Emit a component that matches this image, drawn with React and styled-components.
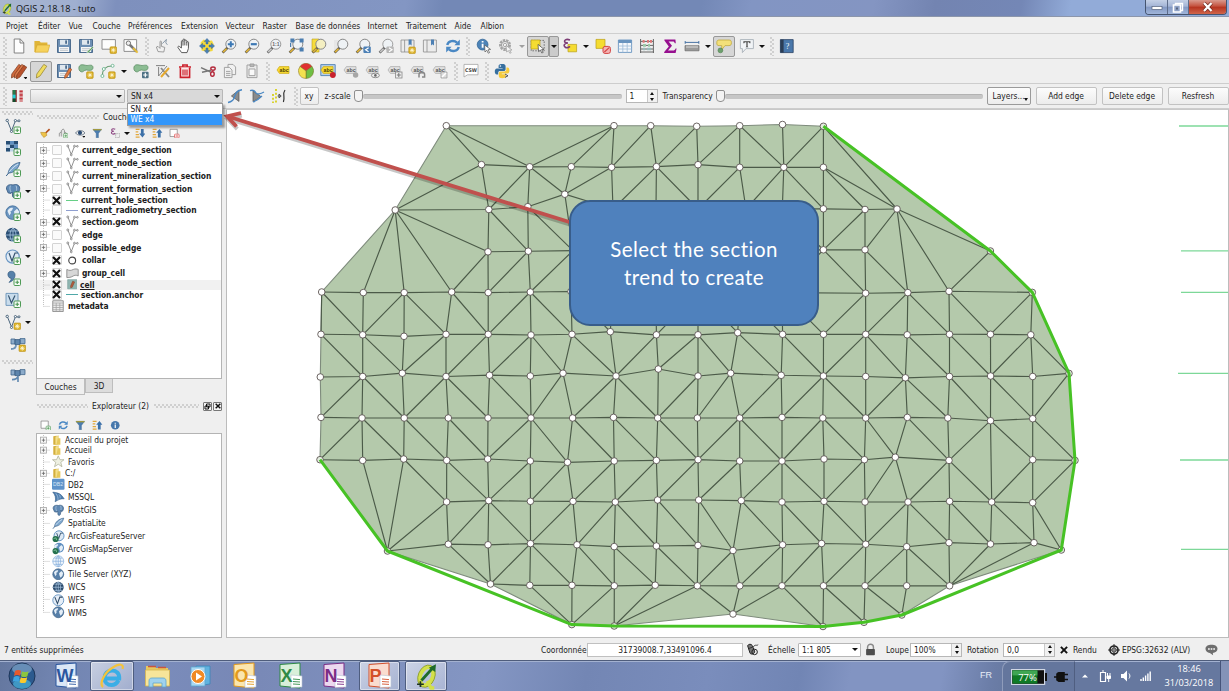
import React from "react";
import styled, { createGlobalStyle, css } from "styled-components";

const Global = createGlobalStyle`
  html, body { margin: 0; padding: 0; overflow: hidden; }
  body, input, button {
    font-family: "DejaVu Sans Condensed", "DejaVu Sans", Tahoma, sans-serif;
    font-size: 8.4px;
    color: #1c1c1c;
  }
  * { box-sizing: border-box; }
  svg { display: block; flex: none; }
`;

/* ---------- icon parts ---------- */

const Plus = ({ x = 9, y = 9 }) => (
  <g>
    <rect x={x} y={y} width="6.5" height="6.5" rx="1" fill="#f4fbf4" stroke="#4f9a56" />
    <path d={`M${x + 3.25} ${y + 1.4}v3.7M${x + 1.4} ${y + 3.25}h3.7`} stroke="#4f9a56" strokeWidth="1.2" />
  </g>
);
const Star = ({ x = 9, y = 9 }) => (
  <g>
    <rect x={x} y={y} width="6.6" height="6.6" rx="1" fill="#dcb228" stroke="#b88d12" strokeWidth=".6" />
    <path d={`M${x + 3.3} ${y + 1}v4.6M${x + 1} ${y + 3.3}h4.6M${x + 1.8} ${y + 1.8}l3 3M${x + 4.8} ${y + 1.8}l-3 3`} stroke="#fff8d8" strokeWidth=".8" />
  </g>
);
const Lens = ({ fill = "#eef2f5", ring = "#888", stick = "#e0b43a", children }) => (
  <g>
    <path d="M6.6 9.6L1.6 14.6" stroke="#4a4a4a" strokeWidth="2.6" />
    <path d="M5.6 10.6L2 14.2" stroke={stick} strokeWidth="1.7" />
    <circle cx="9.8" cy="6.2" r="5" fill={fill} stroke={ring} strokeWidth="1" />
    {children}
  </g>
);
const Disk = () => (
  <g>
    <path d="M1.5 1.5h13v13h-13z" fill="#6d8fb3" stroke="#4d6c8e" />
    <rect x="4" y="1.8" width="8" height="5" fill="#dfe7ee" />
    <rect x="9.2" y="2.4" width="1.8" height="3.4" fill="#4d6c8e" />
    <rect x="3" y="9" width="10" height="5" fill="#f6f6f6" />
    <path d="M4 10.6h8M4 12.4h8" stroke="#b5bcc4" strokeWidth=".8" />
  </g>
);
const VShape = ({ c = "#5b6873" }) => (
  <g fill="none" stroke={c} strokeWidth="1">
    <path d="M2.6 3.2L6.5 13L10.2 3.4M11.5 3h1.6" />
    <circle cx="2.2" cy="2.4" r="1.2" fill="#fff" />
    <circle cx="6.5" cy="13.4" r="1.1" fill="#fff" />
    <circle cx="10.4" cy="2.6" r="1.1" fill="#fff" />
    <circle cx="14" cy="2.8" r="1" fill="#fff" />
  </g>
);
const GlobeLines = () => (
  <path d="M1 8h14M8 1v14M3 4h10M3 12h10M8 1C4 4 4 12 8 15M8 1c4 3 4 11 0 14" fill="none" />
);
const Lands = () => (
  <path d="M2.5 6C4 3 6 2.4 8 3L7 5.4 5.4 6.2 6 8 4.4 10.4zM9 6.6l3-2.8 2.2 2.6-.8 3.6L11 12.4 9.6 9.6z" fill="#e4eef7" />
);
const Tag = ({ fill = "#e0e0e0", ink = "#555", children }) => (
  <g>
    <path d="M1 7L3.4 3.6H13V10.4H3.4z" fill={fill} stroke={fill === "#e0e0e0" ? "#a9a9a9" : "#cba916"} strokeWidth=".7" />
    <text x="3.6" y="8.8" fontSize="5.2" fontWeight="700" fill={ink} fontFamily="Liberation Sans, sans-serif">abc</text>
    {children}
  </g>
);
const Elephant = () => (
  <g>
    <path d="M1.5 6C1 2 5 1 8 2c4-1.4 7.4.6 6.6 4.6-.4 2-1.4 3-2.4 3.2l-.6-2-.8 5c-.4 2.4-3 2.4-3.2.4L7.2 9 6 10.4 3.2 10z" fill="#5f88b3" stroke="#33567c" strokeWidth=".8" />
    <path d="M5.4 2.6C4.600 5 4.800 7 6 9M11 2.600c.8 2 .8 3.400.4 5.200" stroke="#c9dced" strokeWidth=".7" fill="none" />
  </g>
);
const Feather = () => (
  <g>
    <path d="M3 12.6C4 6 9 2.4 15 1.4 13.8 7 9.6 11.4 4.4 12z" fill="#7fa8cf" stroke="#3a628a" strokeWidth=".8" />
    <path d="M1.4 14.8C5 9 9 5.4 13 3" stroke="#e6f0f8" strokeWidth=".8" fill="none" />
    <path d="M1.2 15L4.4 11" stroke="#3a628a" strokeWidth="1" />
  </g>
);
const PencilShape = ({ c = "#cf6a3e", e = "#7b3a1e" }) => (
  <path d="M10.8 1.4l3 1.8L7 13l-3.6 2 .4-4z" fill={c} stroke={e} strokeWidth=".7" />
);
const Poly = () => (
  <path d="M1 4C2 .6 6 2 8 2.4c3 .4 6.6-1.6 7 2C15 8 11 7.6 8.6 7c-3 0-3 2.4-5.4 1.8C1 8 .6 6 1 4z" fill="#8cbd93" stroke="#5d8f66" strokeWidth=".8" />
);

const ICONS = {
  qgis: <g><ellipse cx="8" cy="7.800" rx="3.700" ry="5.600" transform="rotate(22 8 7.800)" fill="none" stroke="#d3e04a" strokeWidth="2.400" /><ellipse cx="8" cy="7.800" rx="4.900" ry="6.800" transform="rotate(22 8 7.800)" fill="none" stroke="#8fa02a" strokeWidth=".5" /><path d="M8.600 10.600l2 4.200h2" stroke="#d3e04a" strokeWidth="2" fill="none" /><path d="M5 10.400L12 2.600" stroke="#1f6b2a" strokeWidth="1.700" /><path d="M13.600.8l-.4 4.600-3.800-2.600z" fill="#1f6b2a" /><path d="M2.400 12.600h4M4.400 10.800v3.400" stroke="#1d3320" strokeWidth="1" /></g>,
  file: <path d="M3.2 1h6l3.6 3.6V15H3.2zM9 1v4h4" fill="#fdfdfd" stroke="#777" strokeWidth=".9" />,
  folder: <g><path d="M.4 3h5l1.4 1.600H13.400V14H.4z" fill="#e0b538" /><path d="M1 14.200L3 7H15.800l-2 7.200z" fill="#f6d25c" stroke="#d2a22a" strokeWidth=".6" /></g>,
  save: <Disk />,
  saveAs: <g><Disk /><path d="M14.600 8.400l1 1-5 5.400-1.800.4.400-1.800z" fill="#63a363" stroke="#fff" strokeWidth=".5" /></g>,
  layoutNew: <g><path d="M1 1.600h13.400v9.600H1z" fill="#fdfdfd" stroke="#848484" strokeWidth=".9" /><Star x={9} y={8.800} /></g>,
  layoutEdit: <g><path d="M1 1.600h12.600v11.800H1z" fill="#fdfdfd" stroke="#848484" strokeWidth=".9" /><path d="M6 6l7.600 7.600" stroke="#777" strokeWidth="2.600" /><path d="M10 10l4.600 4.600" stroke="#e6bd3b" strokeWidth="2" /><circle cx="5.400" cy="5.200" r="2.200" fill="#eee" stroke="#777" /></g>,
  panTouch: <g><path d="M4 13.600L2.400 9 4 8.400l2 2V3.800c0-1 1.400-1 1.400 0v4.600l3.400 1-1 4.600z" fill="#f1f1f1" stroke="#888" strokeWidth=".8" /><path d="M8.400 5.600L12.400 1.400l-.6 3.400 1.600 2" fill="none" stroke="#7d8f9f" strokeWidth=".9" /></g>,
  hand: <path d="M4.600 14.600L1 9.600c-.6-1.400 1-1.800 1.800-.8L4.400 10V3.600c0-1.400 1.600-1.400 1.600 0V2c0-1.400 1.800-1.400 1.800 0v1c0-1.400 2-1.200 2 .2v1.200c.2-1.200 1.800-1 1.800.2l-.2 6-1.400 4zM6 3.600v4M7.800 3v4.400M9.800 4v3.600" fill="#fdfdfd" stroke="#4b4b4b" strokeWidth=".9" />,
  panSel: <g fill="#4a7fb4" stroke="#2f5f92" strokeWidth=".4"><path d="M1.600 4.600l3-3 4 1.400 4.400-.6 1.600 3.600-1 7-5 1-6-1.400z" fill="#f5da3c" stroke="none" /><path d="M8 .4l2.800 3.200H9V6H7V3.600H5.200zM8 15.600l2.800-3.200H9V10H7v2.400H5.200zM.4 8l3.200-2.800V7H6v2H3.600v1.800zM15.600 8l-3.200-2.800V7H10v2h2.400v1.800z" /></g>,
  zoomIn: <Lens><path d="M9.800 3.200v6M6.800 6.200h6" stroke="#3c78b4" strokeWidth="2" /></Lens>,
  zoomOut: <Lens><path d="M6.800 6.200h6" stroke="#3c78b4" strokeWidth="2.200" /></Lens>,
  zoomNative: <Lens ring="#9a9a9a" stick="#c9c9c9"><text x="6.300" y="8" fontSize="5" fontWeight="700" fill="#666" fontFamily="Liberation Sans, sans-serif">1:1</text></Lens>,
  zoomFull: <g><Lens /><g fill="#4a7db0"><path d="M2.400 .6h4v4h-4zM11.600 .6h4v4h-4zM11.600 9.600h4v4h-4z" /><path d="M2.600 5v4" stroke="#4a7db0" strokeWidth="1.200" /></g></g>,
  zoomSel: <g><path d="M1 1h7v13H1z" fill="#f6dc3c" stroke="#b89d21" strokeWidth=".6" /><Lens fill="#f4efc2" /></g>,
  zoomLayer: <g><path d="M1 2h6v11H1z" fill="#e6e6e6" /><Lens /></g>,
  zoomLast: <g><Lens /><rect x="8.400" y="8.600" width="7.400" height="6.400" rx="1" fill="#4c80b6" /><path d="M13.600 9.800l-3 2 3 2" stroke="#fff" fill="none" strokeWidth="1.200" /></g>,
  zoomNext: <g><Lens ring="#9e9e9e" stick="#c6c6c6" /><rect x="8.400" y="8.600" width="7.400" height="6.400" rx="1" fill="#b8b8b8" /><path d="M11 9.800l3 2-3 2" stroke="#fff" fill="none" strokeWidth="1.200" /></g>,
  bookNew: <g><path d="M1 2h13v12H1zM4.600 2v12" fill="#ececec" stroke="#8d8d8d" strokeWidth=".8" /><path d="M8.600 1.400h3v6L10 6.200 8.600 7.600z" fill="#4d80b4" /><Star x={8.800} y={9} /></g>,
  book: <g><path d="M1.400 2h13v12h-13zM5 2v12" fill="#ececec" stroke="#8d8d8d" strokeWidth=".8" /><path d="M9 1.400h3v6l-1.600-1.200L9 7.600z" fill="#4d80b4" /></g>,
  refresh: <g fill="none" stroke="#4a88c4" strokeWidth="2.400"><path d="M2.200 7C3.400 2.600 9 1.800 12 4.600" /><path d="M13.800 9c-1.200 4.400-6.800 5.200-9.800 2.400" /><path d="M14.800 1.600v5.600H9.400zM1.200 14.400V8.800h5.400z" fill="#4a88c4" stroke="none" /></g>,
  info: <g><circle cx="6.600" cy="6.600" r="5.400" fill="#4c83b8" stroke="#316496" strokeWidth=".8" /><path d="M6.600 3v1.600M6.600 5.800v4" stroke="#fff" strokeWidth="1.800" /><path d="M8.600 7l6 4.400-2.600.4 1.600 2.800-1.400.6-1.400-3-1.800 1.800z" fill="#fff" stroke="#555" strokeWidth=".7" /></g>,
  action: <g><circle cx="7" cy="7" r="4.800" fill="none" stroke="#a5a5a5" strokeWidth="2.400" strokeDasharray="2.400 .9" /><circle cx="7" cy="7" r="3.600" fill="#e6e6e6" stroke="#a0a0a0" /><circle cx="7" cy="7" r="1.600" fill="#fff" stroke="#aaa" /><path d="M8 7.400l6 4.600-2.400.2 1.600 2.600-1.400.4-1.400-2.600-1.800 1.400z" fill="#f5f5f5" stroke="#999" strokeWidth=".7" /></g>,
  select: <g><path d="M1.200 2.400h13v10.400h-13z" fill="none" stroke="#6d6d6d" strokeDasharray="1.600 1.200" strokeWidth=".9" /><path d="M1 2h9v9H1z" fill="#f5dc31" stroke="#b99f17" strokeWidth=".7" /><path d="M8 6.400l6 5-2.400.2 1.600 2.800-1.400.6-1.400-3-1.800 1.600z" fill="#fff" stroke="#444" strokeWidth=".7" /></g>,
  expr: <g><path d="M6 6.400h8.600v7.400H6z" fill="#f5dc31" stroke="#b99f17" strokeWidth=".7" /><path d="M8 2C4 .4 1.600 2.400 3 4.200c.6.800 2 .8 3 .8C2.600 5 1.200 7.400 3 9c1.400 1 3.600.6 5-.6" fill="none" stroke="#7d3c75" strokeWidth="1.600" /></g>,
  deselect: <g><path d="M1 1.400h9v9H1z" fill="#f5dc31" stroke="#b99f17" strokeWidth=".7" /><rect x="8" y="8.400" width="7.400" height="7" rx="2" fill="#f4b3b3" stroke="#d34444" /><path d="M9.400 14l4.800-4.400" stroke="#d34444" strokeWidth="1.200" /></g>,
  table: <g><path d="M1.400 2h13.200v12.400H1.400z" fill="#f4f8fc" stroke="#6894bf" strokeWidth=".9" /><path d="M1.400 2h13.200v3H1.400z" fill="#6894bf" /><path d="M5.800 5v9.400M10.200 5v9.400M1.400 8h13.200M1.400 11h13.200" stroke="#9dbbd8" strokeWidth=".8" /></g>,
  abacus: <g><path d="M1.600 1v14M14.400 1v14M1 14h14M2 3.400h12M2 7.400h12M2 11h12" stroke="#666" strokeWidth="1" /><path d="M3.600 3.400h2M8 3.400h2M11 3.400h2" stroke="#d77" strokeWidth="2.600" /><path d="M4 7.400h3M9 7.400h2" stroke="#9cc8a7" strokeWidth="2.600" /><path d="M4 11h2M8 11h4" stroke="#9bb" strokeWidth="2.600" /></g>,
  sigma: <path d="M2.400 1.600h11l.4 3.600h-1c-.4-1.400-1-1.800-2.400-1.800H6.600L10 7.800 6 12.400h4.800c1.600 0 2.200-.6 2.800-2h1L13.600 15H2.200v-1L6.800 8.600 2.400 2.600z" fill="#97108f" />,
  ruler: <g><path d="M1 4.400h14M1.200 3v2.800M14.800 3v2.800" stroke="#4a74a4" strokeWidth="1" /><path d="M1 7.600h14v5.200H1z" fill="#9a9a9a" stroke="#6a6a6a" strokeWidth=".7" /><path d="M3 7.600v2.400M5 7.600v2.400M7 7.600v2.400M9 7.600v2.400M11 7.600v2.400M13 7.600v2.400" stroke="#eee" strokeWidth=".8" /></g>,
  tip: <g><path d="M3 2h10c2 0 2.400 1 2.400 2.600 0 2-.4 3-2.400 3H9L5.600 12l.2-4.400H3C1 7.600.8 6.600.8 4.800.8 3 1.200 2 3 2z" fill="#f3e079" stroke="#c0a93d" strokeWidth=".8" /><circle cx="4.400" cy="12.400" r="2.400" fill="#6da06d" stroke="#4b7d4b" strokeWidth=".6" /></g>,
  textNote: <g><path d="M1.400 1.600h13v9H7l-3.600 4V10.600h-2z" fill="#f1f4f7" stroke="#a8b0b8" strokeWidth=".9" /><path d="M4.400 3.200h7v2h-.8l-.6-1H8.600v4.400l.8.600H6.600l.8-.6V4.200H5.800l-.6 1h-.8z" fill="#444" /></g>,
  help: <g><path d="M1.400 1.600h12.800v13H1.400z" fill="#4a78ab" stroke="#2c4464" strokeWidth=".8" /><path d="M1.400 1.600H4.600v13H1.400z" fill="#2b3d55" /><text x="6.800" y="11" fontSize="8" fill="#fff" fontFamily="Liberation Serif, serif">?</text></g>,

  pencils: <g><g transform="translate(-3 0)"><PencilShape /></g><PencilShape c="#dc7c4c" /><g transform="translate(2 1)"><PencilShape c="#b9522c" /></g><path d="M12.600 14h4l-2 2.400z" fill="#111" /></g>,
  pencil: <PencilShape c="#f0dc5f" e="#8f7d2a" />,
  saveEdit: <g><Disk /><path d="M13.400 5l2.400 1.400-5 8-2.200 1 .2-2.600z" fill="#df7b42" stroke="#8c421d" strokeWidth=".6" /></g>,
  addPoly: <g><Poly /><Star x={8.600} y={8.800} /></g>,
  addLine: <g><path d="M2.400 12.600C2.400 6 6 3 12 3" fill="none" stroke="#6c9d74" strokeWidth="1.200" /><circle cx="2.400" cy="13" r="1.500" fill="#fff" stroke="#7b9" /><circle cx="3.800" cy="6" r="1.500" fill="#fff" stroke="#7b9" /><circle cx="12.600" cy="2.800" r="1.500" fill="#fff" stroke="#7b9" /><Star x={8.600} y={8.800} /></g>,
  movePoly: <g><Poly /><rect x="9" y="8.800" width="6.600" height="6.400" rx="1" fill="#4d7184" /><path d="M12.300 9.800v4.400M10.200 12h4.200" stroke="#fff" strokeWidth="1.200" /></g>,
  nodeTool: <g><path d="M1 2.600h9M3.600 4v9M3.600 13L12 3" stroke="#777" strokeWidth=".9" fill="none" /><path d="M6 5l8 9" stroke="#888" strokeWidth="1.800" /><path d="M14 5l-8 9" stroke="#e5a92e" strokeWidth="2" /></g>,
  trash: <g fill="none" stroke="#cc1f2b"><path d="M2 4h12M5.800 3.600V2h4.400v1.600" strokeWidth="1.500" /><path d="M3.400 4.400V14.400h9.200V4.400" strokeWidth="1.600" fill="#fbeaea" /><path d="M6 6.400v6M8 6.400v6M10 6.400v6" strokeWidth="1.200" /></g>,
  cut: <g><path d="M1 4.600L10.600 9M2 9.200L11 7.200" stroke="#777" strokeWidth="1.400" /><ellipse cx="13" cy="5.600" rx="2.200" ry="1.600" fill="none" stroke="#b3283a" strokeWidth="1.400" /><ellipse cx="12.400" cy="11" rx="1.800" ry="2.200" fill="none" stroke="#b3283a" strokeWidth="1.400" /></g>,
  copy: <g fill="#f1f1f1" stroke="#9b9b9b" strokeWidth=".9"><path d="M6 1.400h5l2.600 2.600v7.600H6z" /><path d="M2.400 4.400h5L10 7v7.600H2.400z" /><path d="M4 8.400h4.400M4 10.400h4.400M4 12.400h4.400" /></g>,
  paste: <g fill="#e9e9e9" stroke="#9b9b9b" strokeWidth=".9"><path d="M3 2h10v12.600H3z" /><path d="M6 1h4v2.400H6z" fill="#bbb" /><path d="M5 6h6v6.600H5z" fill="#f9f9f9" /></g>,
  label: <Tag fill="#f7da33" ink="#4b3c05" />,
  pie: <g stroke="#7a6a22" strokeWidth=".5"><path d="M8 8L2 3.400A7.400 7.400 0 0 1 14 3.400z" fill="#e03131" /><path d="M8 8l6-4.600A7.400 7.400 0 0 1 8 15.400z" fill="#6fbf44" /><path d="M8 8v7.400A7.400 7.400 0 0 1 2 3.400z" fill="#f3e14f" /></g>,
  labelPin: <g><path d="M.8 1.600h14.400v11H.8z" fill="#b7cfe8" stroke="#4f80b4" strokeWidth=".9" /><Tag fill="#f7da33" ink="#4b3c05" /><circle cx="12.800" cy="12" r="2.900" fill="#c9222e" /></g>,
  labelGray: <Tag><circle cx="12.600" cy="12" r="2.700" fill="#a6a6a6" /></Tag>,
  labelEye: <Tag><ellipse cx="10.400" cy="12.400" rx="4" ry="2.300" fill="#eee" stroke="#777" strokeWidth=".8" /><circle cx="10.400" cy="12.400" r="1.300" fill="#666" /></Tag>,
  labelMove: <Tag><rect x="8.600" y="9" width="6.400" height="6" fill="#eee" stroke="#888" strokeWidth=".8" /><path d="M11.800 10v4M9.800 12h4" stroke="#777" /></Tag>,
  labelRot: <Tag><path d="M9 14.600v-3c0-3 5.600-3 5.600 0v2.400H12" fill="none" stroke="#888" strokeWidth="1.500" /></Tag>,
  labelEdit: <Tag><path d="M9 9h6v6H9z" fill="#dedede" stroke="#999" strokeWidth=".7" /><path d="M10 14l4-4" stroke="#fff" strokeWidth="1.400" /></Tag>,
  csw: <g><path d="M1 1.400h14v10.400H4.600L1 14z" fill="#fff" stroke="#a5a5a5" strokeWidth=".8" /><text x="2" y="8.600" fontSize="5" fontWeight="700" fill="#444" fontFamily="DejaVu Sans, sans-serif" textLength="12" lengthAdjust="spacingAndGlyphs">CSW</text></g>,
  python: <g><path d="M8 1C5 1 4.600 2 4.600 3.400V5h4v.6H3C1.400 5.600.8 7 .8 8.600s.6 3 2 3h1.400V9.800C4.200 8.400 5.200 8 6.400 8h3.200c1.200 0 2-.6 2-1.800V3.400C11.600 1.600 10.400 1 8 1z" fill="#366f9f" /><path d="M8.400 15.200c3 0 3.400-1 3.400-2.400v-1.600h-4v-.6h5.600c1.600 0 2-1.400 2-3s-.4-3-1.800-3h-1.200v2c0 1.400-1 1.800-2.200 1.800H7c-1.200 0-2.200.6-2.200 1.800v2.600c0 1.800 1.200 2.400 3.600 2.400z" fill="#f5cb3d" /><circle cx="6.400" cy="3" r=".8" fill="#fff" /><path d="M11 11l3 1.800-3 1.600" stroke="#555" fill="none" /></g>,
  bars: <g><path d="M2.600 2h4.200v12H2.600z" fill="#8b2f2f" /><path d="M2.600 2h3v4.600h-3z" fill="#267c4c" /><path d="M2.600 6.600h3v4h-3z" fill="#1bd3d6" /><path d="M2.600 10.600h3V14h-3z" fill="#124e2c" /><path d="M9.400 2h3.400v12H9.400z" fill="#d88f92" /><path d="M9.600 3.400h3M9.600 7h3M9.600 10.600h3" stroke="#c0343c" strokeWidth="1.400" /></g>,
  secL: <g><path d="M12 2v11.400L4.400 8z" fill="#8b8b8b" stroke="#555" strokeWidth=".7" /><path d="M15 1.800C10 2.400 8.400 5 7.600 8.600S5 13.800 1 14.400" fill="none" stroke="#4a88c4" strokeWidth="1.500" /></g>,
  secR: <g><path d="M4 3v10.600l8-5z" fill="#8b8b8b" stroke="#555" strokeWidth=".7" /><path d="M1 2.600C4 1.600 6 3 7 5s5 .6 8-1M4 14c3-1 6-3 9-6" fill="none" stroke="#4a88c4" strokeWidth="1.300" /></g>,
  secDots: <g><path d="M2 6v9M5 1v14" stroke="#d9d330" strokeWidth="2" strokeDasharray="2 1.800" /><path d="M6.600 8h3M8 6v4l2.200-2z" stroke="#555" fill="none" /><path d="M14 2c-3 4 .4 7-1.600 12" stroke="#333" strokeWidth="1.200" fill="none" /></g>,

  vAdd: <g><VShape c="#4b657c" /><Plus /></g>,
  rasterAdd: <g><path d="M1 1h12v10.500H1z" fill="#bdd2e6" /><path d="M1 1h4v3.500H1zM9 1h4v3.500H9zM5 4.500h4V8H5zM1 8h4v3.500H1zM9 8h4v3.500H9z" fill="#274e74" /><path d="M5 1h4v3.500H5zM9 4.500h4V8H9z" fill="#5f8fbf" /><Plus /></g>,
  featherAdd: <g><Feather /><Plus /></g>,
  pgAdd: <g><Elephant /><Plus /></g>,
  globeAdd: <g><circle cx="7.600" cy="7.600" r="6.800" fill="#6b95c0" stroke="#3f6c98" strokeWidth=".8" /><Lands /><Plus /></g>,
  wcsAdd: <g><circle cx="7.600" cy="7.600" r="6.800" fill="#2b4f74" /><g stroke="#a9c6e2" strokeWidth=".8"><GlobeLines /></g><Plus /></g>,
  wfsAdd: <g><circle cx="7.600" cy="7.600" r="6.600" fill="#dfeaf5" stroke="#6a97c4" strokeWidth="1.200" /><path d="M4 4l3 8 3-8h3" stroke="#35536f" strokeWidth="1.200" fill="none" /><Plus /></g>,
  commaAdd: <g><path d="M5 1.400c4-.8 6 2 4.600 6C8.600 10 6.600 11.600 4 12.400c2-2 2.400-3 2-4.200C3 8.400 1.400 2.600 5 1.400z" fill="#5580a9" stroke="#34597e" strokeWidth=".7" /><Plus /></g>,
  virtAdd: <g><path d="M1 1.400h12v12H1z" fill="#c9dcec" stroke="#6a92b8" strokeWidth=".9" /><path d="M3.400 3.400l3 7.600 3.600-7.600" stroke="#35536f" fill="none" strokeWidth="1.200" /><Plus /></g>,
  vNew: <g><VShape c="#4b657c" /><Star /></g>,
  satNew: <g><path d="M1 3h4v5H1zM10 2.600h5v5h-5z" fill="#8cabca" stroke="#41678d" strokeWidth=".8" /><path d="M5 3.600h5v5H5z" fill="#5d85ad" stroke="#35597d" strokeWidth=".8" /><path d="M6 9c0 3-1.600 4-5 4" stroke="#6f93b8" strokeWidth="1.800" fill="none" /><Star /></g>,
  sat: <g><path d="M1 3h4v5H1zM10 2.600h5v5h-5z" fill="#8cabca" stroke="#41678d" strokeWidth=".8" /><path d="M5 3.600h5v5H5z" fill="#5d85ad" stroke="#35597d" strokeWidth=".8" /><path d="M8 8.600c-.4 3.400-3 4-6 4M8 9v6" stroke="#5f88b0" strokeWidth="1.600" fill="none" /></g>,

  brush: <g><path d="M14.600 1.600L8.600 7.600" stroke="#b44f1d" strokeWidth="2.600" /><path d="M1 6.600l8 .4 1.600 4L6 14.400C4 13 2 10 1 6.600z" fill="#eec34a" stroke="#b28420" strokeWidth=".8" /></g>,
  groupAdd: <g><path d="M5 13V4l3-2.600L10 4v9M2 13V8l3-2M10 6l3 2v3" fill="#e3e3e3" stroke="#777" /><Plus x={8.600} y={8.600} /></g>,
  eye: <g><path d="M.8 7.600C4 2.600 12 2.600 15.200 7.600 12 12 4 12 .8 7.600z" fill="#eee" stroke="#5b6b7b" strokeWidth="1.200" /><circle cx="7.600" cy="7.400" r="3.200" fill="#2a4b73" /><path d="M11 12h5l-2.500 3z" fill="#111" /></g>,
  filter: <g><path d="M1.400 2h13.200L9.800 8.400V15H6.400V8.400z" fill="#4c7db0" stroke="#34618f" strokeWidth=".6" /><path d="M1.600 1.600h12.800v2H1.600z" fill="#a59a3a" /></g>,
  exprFilter: <g><path d="M8 2C4 -.2 1.600 2 3 4c.6.800 2 .8 3 .8C2.600 4.800 1.200 7 3 8.600c1.400 1 3.600.6 5-.6" fill="none" stroke="#8d4683" strokeWidth="1.600" /><path d="M8.600 8.600h6v6h-6z" fill="none" stroke="#888" strokeDasharray="1.500 1" /></g>,
  expand: <g><path d="M1 2h6M1 6h4M1 10h5M1 14h6" stroke="#e2a83d" strokeWidth="2" /><path d="M9 1.400v7H6.400l5 6 4.400-6h-2.600v-7z" fill="#3c70a8" /></g>,
  collapse: <g><path d="M1 2h6M1 6h4M1 10h5M1 14h6" stroke="#e2a83d" strokeWidth="2" /><path d="M9 14.400v-7H6.400l5-6 4.400 6h-2.600v7z" fill="#3c70a8" /></g>,
  remove: <g><path d="M1.600 2h11v11h-11z" fill="#fdfdfd" stroke="#777" /><rect x="8.400" y="9.400" width="7" height="5.600" rx="1" fill="#fff" stroke="#d44" /><path d="M10 12.200h4" stroke="#d44" strokeWidth="1.400" /></g>,
  addFrame: <g><path d="M1.600 1.600h11v11h-11z" fill="#fdfdfd" stroke="#777" /><Plus x={9.400} y={9.400} /></g>,
  infoDot: <g><circle cx="8" cy="8" r="6.600" fill="#4678ac" /><path d="M8 4v1.800M8 7v5" stroke="#fff" strokeWidth="1.800" /></g>,

  v: <VShape c="#777" />,
  point: <circle cx="7.600" cy="8" r="4.200" fill="#fff" stroke="#444" strokeWidth="1.400" />,
  polygon: <path d="M1 3c3 1.600 5 1.600 8 0 2-1 5-.6 6 0v8c-3-1.600-5-.6-6 0-3 2-6 2-8 2z" fill="#d7d7d7" stroke="#808080" />,
  cell: <g><path d="M1 1h14v14H1z" fill="#8fb5b0" stroke="#7ba09c" /><path d="M8.600 3.400l3 1L8 12.600l-2.400.8-.2-2.600z" fill="#b35b3d" stroke="#7c3b24" strokeWidth=".7" /></g>,
  metadata: <g><path d="M1 1h14v14.400H1z" fill="#ececec" stroke="#777" /><path d="M1 4h14M1 7h14M1 10h14M1 13h14M5.600 4v11M10.400 4v11" stroke="#a1a1a1" /></g>,

  folderY: <g><path d="M2 2l5-1v14H2z" fill="#d6b03e" /><path d="M5 2.600l5-1.600v13L5 15.600z" fill="#f4e08a" stroke="#d1ac3f" strokeWidth=".5" /><path d="M9 5h4v10H7z" fill="#e6c85c" /></g>,
  fav: <path d="M8 1l2.200 5h5.200l-4.200 3.400 1.600 5.600L8 11.800 3.200 15l1.600-5.600L.6 6h5.200z" fill="#eef0e2" stroke="#a9ac94" strokeWidth=".9" />,
  db2: <g><rect x="0" y="1" width="16" height="14" rx="1.500" fill="#5e93ca" /><text x="1.400" y="10.600" fontSize="6.600" fill="#d5e6f6" fontFamily="Liberation Sans, sans-serif">DB2</text></g>,
  mssql: <g><path d="M1 1.400c5 .6 9 1.600 11.600 4.600l3 4C12 9.400 8 11 4 13.800 5.400 9 4 5 1 1.400z" fill="#4f7fb0" stroke="#2c5682" strokeWidth=".7" /><path d="M5 3c2 3 3 5 2.600 8.600M9 4.400c1.400 2 1.600 3 1.400 5" stroke="#bdd3e8" strokeWidth=".8" fill="none" /></g>,
  pg: <Elephant />,
  feather: <Feather />,
  arcF: <g><circle cx="9" cy="7.400" r="6.400" fill="#dfeaf5" stroke="#5f8fc0" strokeWidth="1.200" /><path d="M6 4l2.600 7L11 4h3" stroke="#35536f" strokeWidth="1.200" fill="none" /><circle cx="4.600" cy="11.600" r="4" fill="#26724f" /><path d="M2 11l3-1 1 3" stroke="#8fd0a8" fill="none" /></g>,
  arcM: <g><circle cx="9" cy="7.400" r="6.400" fill="#5f8fc0" /><Lands /><circle cx="4.600" cy="11.600" r="4" fill="#26724f" /><path d="M2 11l3-1 1 3" stroke="#8fd0a8" fill="none" /></g>,
  ows: <g stroke="#85aedb" strokeWidth=".9"><circle cx="8" cy="8" r="7" fill="#f0f6fc" /><GlobeLines /></g>,
  globe: <g><circle cx="8" cy="8" r="7" fill="#577fa8" stroke="#34597f" strokeWidth=".8" /><Lands /></g>,
  wcs: <g><circle cx="8" cy="8" r="7" fill="#2b4a6b" /><g stroke="#a9c6e2" strokeWidth=".9"><GlobeLines /></g></g>,
  wfs: <g><circle cx="8" cy="8" r="7" fill="#e6eef7" stroke="#6a97c4" strokeWidth="1.200" /><path d="M3.600 4L7 12.400 10 4h3.600" stroke="#2e4a66" strokeWidth="1.300" fill="none" /></g>,

  mouse: <g fill="none" stroke="#222"><path d="M2 3.400C3 1 6.600 1 7.600 3l3 7c.6 3-3.600 5-5.600 2.600z" fill="#777" strokeWidth="1.200" /><path d="M3 7l5-2M9 5c2-4 4-1 6-3" /><circle cx="10.600" cy="11" r="3.400" strokeWidth="1.200" /></g>,
  lock: <g><path d="M4.400 8V5c0-4.600 7.200-4.600 7.200 0v3" fill="none" stroke="#8a8a8a" strokeWidth="1.800" /><rect x="2.600" y="7.400" width="10.800" height="7.600" rx="1" fill="#4e4e4e" /></g>,
  crs: <g><circle cx="8" cy="8" r="5.400" fill="#efefef" stroke="#222" strokeWidth="2.200" /><path d="M8 0v16M0 8h16" stroke="#222" strokeWidth="1.200" /><circle cx="8" cy="8" r="3" fill="#888" stroke="#333" /></g>,
  bubble: <g><path d="M8 2c4.400 0 7.400 1.800 7.400 5S12.600 12 9.600 12.200L10 15l-4-2.800C2.600 11.600.6 10 .6 7 .6 3.800 3.600 2 8 2z" fill="#6e6e6e" /><path d="M3.800 7.400h2M7 7.400h2M10.200 7.400h2" stroke="#fff" strokeWidth="1.800" /></g>,
};

const Icon = ({ name, size = 16 }) => (
  <svg width={size} height={size} viewBox="0 0 16 16" aria-hidden="true">{ICONS[name]}</svg>
);

/* ---------- generic controls ---------- */

const dots = css`
  background: radial-gradient(circle at 1px 1px, #cfcfcf 0.7px, transparent 1px) 0 0 / 4px 4px,
    radial-gradient(circle at 3px 3px, #cfcfcf 0.7px, transparent 1px) 0 0 / 4px 4px;
`;

const Window = styled.div`
  position: relative;
  width: 1229px;
  height: 691px;
  display: flex;
  flex-direction: column;
  background: #efefef;
  overflow: hidden;
`;

const TitleBar = styled.header`
  height: 17px;
  flex: none;
  display: flex;
  align-items: flex-start;
  justify-content: space-between;
  border-bottom: 1px solid #8c96ab;
  background: linear-gradient(100deg, #a9b6d0 0, #9fafd0 75px, #7e90bd 115px, #8396c3 33%, #7388b6 36%, #7388b6 57%, #8295c3 61%, #8495c2 71%, #7384b1 76%, #7487b6 83%, #92abd8 87%);
`;
const Title = styled.div`
  display: flex;
  align-items: center;
  gap: 3px;
  height: 17px;
  padding-left: 1px;
  font: 9.1px "Open Sans", "Noto Sans", sans-serif;
  color: #111;
`;
const Caption = styled.div`
  display: flex;
  width: 82px;
  height: 15px;
  margin-right: 2px;
  border: 1px solid #45546f;
  border-top: 0;
  border-radius: 0 0 4px 4px;
  overflow: hidden;
`;
const CaptionButton = styled.div`
  flex: ${(p) => p.$grow};
  display: flex;
  align-items: center;
  justify-content: center;
  border-left: ${(p) => (p.$first ? 0 : "1px solid #5d6c8a")};
  background: ${(p) => (p.$close ? "linear-gradient(#d99a8e, #c4513d 45%, #b5331f 50%, #d0654a)" : "linear-gradient(#c4d0e6, #a4b5d6 45%, #8398c2 50%, #a0b5da)")};
`;

const MenuBar = styled.nav`
  height: 17px;
  flex: none;
  display: flex;
  align-items: center;
  gap: 10px;
  padding: 2px 0 0 6px;
  border-bottom: 1px solid #cfcfcf;
`;
const MenuItem = styled.span`
  width: ${(p) => p.$w}px;
  white-space: nowrap;
`;

const ToolBar = styled.div`
  height: 25px;
  flex: none;
  display: flex;
  align-items: center;
  border-bottom: 1px solid #cdcdcd;
  padding-left: 3px;
`;
const Grip = styled.span`
  width: 4px;
  height: 19px;
  flex: none;
  margin: 0 ${(p) => p.$after ?? 2}px 0 ${(p) => p.$gap ?? 0}px;
  ${dots}
`;
const ToolButton = styled.span`
  width: ${(p) => p.$w ?? 22.35}px;
  height: 21px;
  flex: none;
  display: flex;
  align-items: center;
  justify-content: center;
  ${(p) => p.$on && css`
    background: #d6d6d6;
    border: 1px solid #989898;
    border-radius: 2px;
  `}
`;
const Caret = styled.span`
  width: ${(p) => p.$w ?? 10}px;
  height: 21px;
  flex: none;
  display: flex;
  align-items: center;
  justify-content: center;
  ${(p) => p.$on && css`
    background: #cbcbcb;
    border: 1px solid #989898;
    border-radius: 0 2px 2px 0;
  `}
  &::after {
    content: "";
    border: 3px solid transparent;
    border-bottom: 0;
    border-top: 3.5px solid ${(p) => (p.$dim ? "#a0a0a0" : "#111")};
  }
`;

const Select = styled.div`
  width: ${(p) => p.$w}px;
  height: 14px;
  flex: none;
  display: flex;
  align-items: center;
  justify-content: space-between;
  padding-left: 3px;
  border: 1px solid #b7b7b7;
  border-radius: 1px;
  background: ${(p) => p.$bg ?? "linear-gradient(#f4f4f4, #dedede)"};
  margin: 0 ${(p) => p.$mr ?? 2}px 0 ${(p) => p.$ml ?? 0}px;
`;
const PushButton = styled.button`
  width: ${(p) => p.$w}px;
  height: 18px;
  flex: none;
  padding: 0;
  border: 1px solid ${(p) => (p.$dark ? "#9a9a9a" : "#c2c2c2")};
  border-radius: 2px;
  background: linear-gradient(#fcfcfc, #ececec);
  margin: 0 ${(p) => p.$mr ?? 6}px 0 ${(p) => p.$ml ?? 0}px;
  white-space: nowrap;
  position: relative;
`;
const Corner = styled.i`
  position: absolute;
  right: 2px;
  bottom: 3px;
  border: 2.5px solid transparent;
  border-top: 3px solid #111;
  border-bottom: 0;
`;
const Label = styled.span`
  width: ${(p) => (p.$w ? p.$w + "px" : "auto")};
  flex: none;
  white-space: nowrap;
`;
const Slider = styled.span`
  width: ${(p) => p.$w}px;
  height: 12px;
  flex: none;
  display: flex;
  align-items: center;
  &::before {
    content: "";
    width: 7px;
    height: 10px;
    flex: none;
    border: 1px solid #8f8f8f;
    border-radius: 2px 2px 4px 4px;
    background: #f4f4f4;
  }
  &::after {
    content: "";
    flex: 1;
    height: 4px;
    border-radius: 2px;
    background: #c6c6c6;
    border-top: 1px solid #b2b2b2;
  }
`;
const SpinBox = styled.div`
  width: ${(p) => p.$w}px;
  height: 14px;
  flex: none;
  display: flex;
  align-items: stretch;
  border: 1px solid #b7b7b7;
  background: #fff;
  margin: 0 ${(p) => p.$mr}px 0 ${(p) => p.$ml ?? 0}px;
  span { flex: 1; padding-left: 3px; line-height: 12px; }
`;
const Steps = styled.i`
  width: 10px;
  display: flex;
  flex-direction: column;
  align-items: center;
  justify-content: space-around;
  background: #f1f1f1;
  border-left: 1px solid #c9c9c9;
  &::before, &::after { content: ""; border: 2.5px solid transparent; }
  &::before { border-top: 0; border-bottom: 3px solid #111; }
  &::after { border-bottom: 0; border-top: 3px solid #111; }
`;

const Popup = styled.div`
  position: absolute;
  z-index: 5;
  left: 127px;
  top: 103px;
  width: 96px;
  border: 1px solid #9a9a9a;
  background: #fff;
  box-shadow: 1.5px 2px 2px rgba(0, 0, 0, 0.35);
`;
const Option = styled.div`
  height: 10.3px;
  line-height: 10.3px;
  padding-left: 2.5px;
  color: ${(p) => (p.$active ? "#fff" : "#1c1c1c")};
  background: ${(p) => (p.$active ? "#3296fa" : "#fff")};
`;

/* ---------- body ---------- */

const Body = styled.main`
  height: 529px;
  flex: none;
  display: flex;
`;
const SideBar = styled.aside`
  width: 36px;
  flex: none;
  padding-top: 2px;
  display: flex;
  flex-direction: column;
`;
const SideGrip = styled.span`
  height: 4px;
  margin: ${(p) => p.$mt ?? 0}px 3px 0 2px;
  ${dots}
`;
const SideItem = styled.span`
  height: 21.8px;
  display: flex;
  align-items: center;
  padding-left: ${(p) => (p.$shift ? 10 : 5)}px;
`;
const Dock = styled.section`
  width: 186px;
  flex: none;
  display: flex;
  flex-direction: column;
`;
const DockTitle = styled.div`
  height: ${(p) => p.$h}px;
  flex: none;
  display: flex;
  align-items: center;
  gap: 4px;
`;
const DotLine = styled.span`
  flex: 1;
  max-width: ${(p) => (p.$w ? p.$w + "px" : "none")};
  min-width: ${(p) => (p.$w ? p.$w + "px" : 0)};
  height: 4px;
  margin: 0 ${(p) => p.$mr ?? 0}px 0 1px;
  ${dots}
`;
const MiniButton = styled.span`
  width: 9px;
  height: 9px;
  flex: none;
  display: flex;
  align-items: center;
  justify-content: center;
  border: 1px solid #777;
  border-radius: 1px;
  background: #f4f4f4;
  margin-left: ${(p) => p.$ml ?? 0}px;
`;
const DockTools = styled.div`
  height: ${(p) => p.$h}px;
  flex: none;
  display: flex;
  align-items: center;
  padding-left: 1px;
`;
const DockTool = styled.span`
  width: 17.3px;
  display: flex;
  justify-content: center;
`;
const Tree = styled.div`
  height: ${(p) => p.$h}px;
  flex: none;
  padding-top: 1px;
  border: 1px solid #b4b4b4;
  background: #fff;
`;
const TreeRow = styled.div`
  height: ${(p) => p.$h}px;
  display: flex;
  align-items: center;
  white-space: nowrap;
  background: ${(p) => (p.$current ? "#f1f1f1" : "transparent")};
`;
const Check = styled.span`
  width: 10px;
  height: 10px;
  flex: none;
  margin: 0 4px 0 -0.5px;
  display: flex;
  align-items: center;
  justify-content: center;
  border: 1px solid #d4d4d4;
  border-radius: 1px;
  background: #fafafa;
`;
const Symbol = styled.span`
  width: ${(p) => p.$w ?? 13}px;
  flex: none;
  display: flex;
  justify-content: center;
  margin-right: ${(p) => p.$mr ?? 4}px;
`;
const Dash = styled.i`
  width: 12px;
  height: 1px;
  background: ${(p) => p.$c};
`;
const LayerName = styled.b`
  font-size: 8.4px;
  letter-spacing: -0.05px;
  text-decoration: ${(p) => (p.$current ? "underline" : "none")};
`;
const Tabs = styled.div`
  height: 16px;
  flex: none;
  display: flex;
  align-items: flex-start;
`;
const Tab = styled.span`
  width: ${(p) => p.$w}px;
  height: ${(p) => (p.$active ? 16 : 14)}px;
  display: flex;
  align-items: center;
  justify-content: center;
  padding-top: 1px;
  border: 1px solid #bdbdbd;
  border-top: 0;
  background: ${(p) => (p.$active ? "#efefef" : "#dcdcdc")};
`;
const Splitter = styled.div`
  width: 4px;
  flex: none;
`;
const MapPanel = styled.section`
  position: relative;
  flex: 1;
  background: #fff;
  border: 1px solid #bcbcbc;
  border-top-color: #c9c9c9;
`;
const Canvas = styled.svg`
  position: absolute;
  left: -1px;
  top: -1px;
  overflow: visible;
`;
const Callout = styled.div`
  position: absolute;
  left: 342px;
  top: 90px;
  width: 250px;
  height: 126px;
  display: flex;
  align-items: center;
  justify-content: center;
  text-align: center;
  border: 2px solid #385d8a;
  border-radius: 21px;
  background: #4f81bd;
  color: #fff;
  font: 20.5px/28px Lato, "Open Sans", sans-serif;
  letter-spacing: 0.45px;
`;

const StatusBar = styled.footer`
  height: 22px;
  flex: none;
  display: flex;
  align-items: center;
  padding: 1px 0 0 4px;
`;
const Field = styled.div`
  width: 156px;
  height: 14px;
  flex: none;
  line-height: 12px;
  text-align: center;
  background: #fff;
  border: 1px solid #c0c0c0;
  margin-right: 3px;
`;

/* ---------- taskbar ---------- */

const TaskBar = styled.footer`
  height: 31px;
  flex: none;
  display: flex;
  align-items: stretch;
  border-top: 1px solid #4f5d7c;
  box-shadow: inset 0 1px 0 #a3b1d0;
  background: linear-gradient(100deg, #64779f 0, #7285b1 60px, #7a8cbb 150px, #7888b6 240px, #8496c3 480px, #7386b4 580px, #7a8dbc 700px, #7185b4 790px, #8294c2 840px, #8294c2 930px, #6b7da7 980px, #66789f 1000px);
`;
const TaskItem = styled.span`
  width: ${(p) => p.$w}px;
  margin: 0 ${(p) => p.$mr ?? 0}px 0 ${(p) => p.$ml ?? 0}px;
  flex: none;
  display: flex;
  align-items: center;
  justify-content: center;
  ${(p) => p.$open && css`
    border: 1px solid #4e5d7f;
    border-radius: 2px;
    box-shadow: inset 0 0 0 1px rgba(255, 255, 255, 0.45);
    background: linear-gradient(135deg, rgba(255, 255, 255, 0.6), rgba(255, 255, 255, 0.3));
  `}
`;
const Spacer = styled.span`
  flex: 1;
`;
const Lang = styled.span`
  align-self: center;
  width: 22px;
  color: #e8edf6;
  font: 9px "Liberation Sans", sans-serif;
  margin-top: -3px;
`;
const Battery = styled.div`
  width: 73px;
  display: flex;
  align-items: center;
  gap: 7px;
  padding-left: 8px;
  border: 1px solid #8f9cbb;
  border-right-color: #4f5e80;
  border-bottom: 0;
  border-radius: 8px 0 0 0;
  background: #64769d;
`;
const Tray = styled.div`
  width: 154px;
  display: flex;
  align-items: center;
  padding-left: 5px;
`;
const TrayIcon = styled.span`
  width: ${(p) => p.$w}px;
  display: flex;
  justify-content: center;
`;
const Clock = styled.time`
  flex: 1;
  text-align: center;
  color: #fff;
  font: 9.2px/14px "Open Sans", "Noto Sans", sans-serif;
  white-space: nowrap;
`;
const ShowDesktop = styled.span`
  width: 9px;
  align-self: stretch;
  border-left: 1px solid #46547a;
  background: #8493b8;
`;

/* ---------- data ---------- */

const MENUS = [["Projet", 22], ["Éditer", 20.5], ["Vue", 14], ["Couche", 25.5], ["Préférences", 43], ["Extension", 34.5], ["Vecteur", 27], ["Raster", 23], ["Base de données", 62], ["Internet", 28.5], ["Traitement", 38.5], ["Aide", 16], ["Albion", 24]];

const FILE_TOOLS = ["file", "folder", "save", "saveAs", "layoutNew", "layoutEdit"];
const NAV_TOOLS = ["panTouch", "hand", "panSel", "zoomIn", "zoomOut", "zoomNative", "zoomFull", "zoomSel", "zoomLayer", "zoomLast", "zoomNext", "bookNew", "book", "refresh"];
const EDIT_TOOLS = ["movePoly", "nodeTool", "trash", "cut", "copy", "paste"];
const LABEL_TOOLS = ["label", "pie", "labelPin", "labelGray", "labelEye", "labelMove", "labelRot", "labelEdit"];

const SIDE = [["vAdd"], ["rasterAdd"], ["featherAdd"], ["pgAdd", 1], ["globeAdd", 1], ["wcsAdd"], ["wfsAdd", 1], ["commaAdd"], ["virtAdd"], ["vNew", 1], ["satNew", 0, 1]];

const LAYERS = [
  { name: "current_edge_section", icon: "v", box: true },
  { name: "current_node_section", icon: "v", box: true },
  { name: "current_mineralization_section", icon: "v", box: true },
  { name: "current_formation_section", icon: "v", box: true },
  { name: "current_hole_section", line: "#66cf86", on: true },
  { name: "current_radiometry_section", line: "#8f9fd0" },
  { name: "section.geom", icon: "v", box: true, on: true },
  { name: "edge", icon: "v", box: true },
  { name: "possible_edge", icon: "v", box: true },
  { name: "collar", icon: "point", on: true },
  { name: "group_cell", icon: "polygon", box: true, on: true },
  { name: "cell", icon: "cell", on: true, current: true },
  { name: "section.anchor", line: "#4fa8a8", on: true },
];

const SOURCES = [
  ["Accueil du projet", "folderY", 10.3, true], ["Accueil", "folderY", 10.3, true], ["Favoris", "fav", 12],
  ["C:/", "folderY", 10.6, true], ["DB2", "db2", 12.8], ["MSSQL", "mssql", 12.8], ["PostGIS", "pg", 12.8, true],
  ["SpatiaLite", "feather", 12.8], ["ArcGisFeatureServer", "arcF", 12.8], ["ArcGisMapServer", "arcM", 12.8],
  ["OWS", "ows", 12.8], ["Tile Server (XYZ)", "globe", 12.8], ["WCS", "wcs", 12.8], ["WFS", "wfs", 12.8], ["WMS", "globe", 12.8],
];

/* Mesh nodes, one array per row; the key's number is the column. */
const row = (k, start, pts) => pts.map(([x, y], i) => [k + (start + i), [x, y]]);
const NODES = Object.fromEntries([
  ...row("A", 0, [[446.3, 125.7], [614, 125.7], [650.7, 125.7], [696.7, 126.3], [739.7, 125.7], [782.5, 124.5], [823.4, 126.3]]),
  ...row("B", 0, [[481.5, 164.6], [529.7, 166.8], [571.3, 166.7], [611.6, 167.3], [656.4, 166.6], [698, 164.7], [739.7, 167.3], [783.8, 167.3], [823.4, 167.3]]),
  ["C0", [564.8, 194.2]],
  ...row("D", 0, [[395.2, 210], [488.8, 209.5], [527.8, 206.7], [613, 209], [656, 209], [698, 209], [746, 209], [782.3, 209]]),
  ...row("D", 9, [[823.4, 208.8], [865, 209.5], [897, 209]]),
  ...row("E", 0, [[488, 251.8], [528.3, 251.2], [573, 250.6], [613, 250], [656, 250], [698, 250], [740, 250], [782, 250]]),
  ...row("E", 9, [[823.4, 249.8], [865, 249.8]]),
  ["E14", [990.4, 251]],
  ...row("F", 0, [[321.7, 292], [363.3, 292.6], [404.2, 292.6], [451.7, 292], [488.2, 292.6], [530.3, 292], [571, 291.5], [613, 292], [656, 292], [698, 292], [740, 292]]),
  ["F20", [782, 292.6]], ["F11", [865.6, 293.2]], ["F12", [907.8, 292.6]], ["F13", [949, 291.3]], ["F15", [1032.3, 292.4]],
  ...row("G", 0, [[321, 334.3], [362.7, 334.8], [404, 336.3], [446, 334.3], [488.2, 334.3], [531, 335], [572, 334.3], [610.3, 331.7], [656.4, 334.8], [698, 334.8], [737.7, 332.7], [782.6, 334.3], [823.5, 334.3], [865.7, 334.3], [907.2, 334.8], [949.5, 334.3], [990.5, 334.3], [1030.8, 334.8]]),
  ...row("H", 0, [[320.3, 377], [362.7, 376.5], [402.3, 373.2], [446, 376.5], [489.5, 375.2], [530.3, 376], [563, 373.2], [616, 376], [658.3, 369], [698, 376], [730.7, 373.2], [781.2, 375.3], [823.4, 376], [865.7, 376.5], [905.4, 377.8], [949.5, 376.5], [990.6, 376], [1032.7, 376.5], [1069, 373.4]]),
  ...row("I", 0, [[321, 417.4], [362, 418], [404.2, 418], [448.3, 418], [488, 418], [531, 418], [572.6, 418], [613.5, 417.4], [657.7, 418], [697.4, 418], [739.7, 418], [782, 417.4], [822.8, 418], [865.7, 418], [907.3, 417.4], [947.8, 418], [990.5, 420.7], [1032.7, 418.7]]),
  ...row("J", 0, [[320, 459.7], [362.7, 460.4], [403.7, 459], [446.7, 460.4], [487.7, 459], [530.3, 461], [567.5, 462.3], [614.2, 461], [656.4, 460.4], [698, 459.7], [739.7, 461], [782, 461], [824, 459], [864.4, 459.7], [895.3, 457.2], [949, 460.4]]),
  ["J17", [1032.7, 459.7]], ["J18", [1075, 460.4]],
  ...row("K", 3, [[446.6, 501.9], [488.7, 500.6], [530.4, 501.3], [573, 501.3], [615.3, 502], [657.6, 500], [698.7, 500], [741.3, 500.6], [782, 502], [824, 501.3], [865, 502], [908, 502], [949.6, 501.3], [991.7, 502], [1032.7, 502.7]]),
  ...row("L", 2, [[387.5, 551], [448.3, 544.2], [488, 544.8], [530.5, 543.6], [577, 544.8], [614.2, 546.6], [656.4, 546], [698, 545.4], [733, 550.5], [782.6, 544.8], [821.6, 543.5], [865.7, 544.2], [906.7, 546.7], [949, 542.7], [990.5, 544], [1034, 542.7], [1061.3, 550]]),
  ...row("M", 4, [[490.5, 584], [529.8, 585.3], [572, 585.3], [614.3, 585.8], [655.2, 585.2], [697.3, 585.8], [739.8, 585.8], [782, 585.8], [823.5, 585.8], [865, 585.8], [906.7, 585.8], [949.6, 585.8]]),
  ["N6", [571.8, 624.6]], ["N7", [614.2, 626]], ["N10", [733, 614]], ["N12", [823, 626.5]], ["N13", [864, 622.3]], ["N14", [901.8, 615]],
]);

const range = (k, a, b) => Array.from({ length: b - a + 1 }, (_, i) => k + (a + i)).join(" ");
/* Horizontal chains; each consecutive pair is an edge. */
const CHAINS = [
  range("B", 0, 8), "D0 D1 D2 C0 D3 D4 D5 D6 D7 D9 D10 D11", "E0 E1 E2 E3 E4 E5 E6 E7 E9 E10",
  "F0 F1 F2 F3 F4 F5 F6 F7 F8 F9 F10 F20 F11 F12 F13 F15", range("G", 0, 17), range("H", 0, 18), range("I", 0, 17),
  range("J", 0, 15), "J17 J18", range("K", 3, 17), range("L", 2, 18), range("M", 4, 15),
];
/* Links from a node down to the next row. */
const LINKS = `
A0:B0,B1 A1:B1,B2,B3 A2:B3,B4 A3:B4,B5 A4:B5,B6,B7 A5:B7 A6:B7,B8,D11
B0:D0,D1 B1:D1,D2,C0 B2:C0 B3:C0,D3 B4:D3,D4,D5 B5:D5 B6:D5,D6 B7:D6,D7,D9 B8:D9,D10,D11
C0:E2 D0:E0,F1,F2,F3 D1:E0,E1 D2:E1,E2 D7:E9 D9:E9 D10:E9,E10 D11:E10,F12,F13,E14
E0:F3,F4 E1:F4,F5 E2:F5 E9:F20,F11 E10:F11,F12 E14:F13
F0:G0,G1 F1:G1 F2:G1,G2,G3 F3:G3,G4 F4:G4 F5:G4,G5,G6 F6:G6,G7 F7:G7 F8:G8 F9:G8,G9,G10 F10:G10,G11 F20:G11,G12
F11:G12,G13 F12:G13,G14,G15 F13:G15,G16 F15:G16,G17
G0:H1 G1:H1,H2 G2:H2 G3:H2,H3 G4:H3,H4 G5:H4,H5,H6 G6:H6,H7 G7:H7 G8:H7,H8 G9:H8,H9,H10 G10:H10,H11 G11:H11,H12 G12:H12
G13:H12,H13,H14 G14:H14,H15 G15:H15,H16 G16:H16 G17:H16,H17,H18
H1:I0,I1,I2 H2:I2 H3:I2,I3,I4 H4:I4,I5 H5:I5 H6:I5,I6 H7:I6,I7,I8 H8:I8 H9:I8,I9 H10:I9,I10 H11:I10,I11 H12:I11,I12,I13 H13:I13
H14:I13,I14,I15 H15:I15,I16 H16:I16,I17 H17:I17 H18:I17
I1:J0,J1,J2 I2:J2,J3 I3:J3,J4 I4:J4 I5:J4,J5,J6 I6:J6,J7 I7:J7,J8 I8:J8,J9 I9:J9 I10:J9,J10,J11 I11:J11 I12:J11,J12,J13 I13:J13,J14
I14:J14,J15 I15:J15 I16:J15,K16,J17 I17:J17,J18
J1:L2 J2:L2,K3 J3:K3,K4 J4:K4 J5:K4,K5 J6:K5,K6 J7:K6,K7 J8:K7,K8 J9:K8,K9 J10:K9,K10 J11:K10,K11,K12 J12:K12 J13:K12,K13
J14:K13,K14 J15:K14,K15,K16 J17:K16,K17 J18:K17
K3:L2,L3 K4:L3,L4,L5 K5:L5 K6:L5,L6 K7:L6,L7,L8 K8:L8,L9 K9:L9,L10 K10:L10,L11 K11:L11,L12 K12:L12,L13 K13:L13 K14:L13,L14,L15
K15:L15,L16 K16:L16,L17 K17:L17,L18
L3:M4 L4:M4 L5:M4,M5,M6 L6:M6,M7 L7:M7,M8 L8:M8,M9 L9:M9 L10:M9,M10 L11:M10,M11 L12:M11,M12 L13:M12,M13 L14:M13,M14,M15
L15:M15 L16:M15 L17:M15
M5:N6 M6:N6 M7:N6,N7 M8:N7 M9:N7,N10 M10:N10 M11:N10,N12 M12:N12,N13 M13:N13,N14 M14:N14`;
const HULL = "A0 A1 A2 A3 A4 A5 A6 E14 F15 H18 J18 L18 M15 N14 N13 N12 N10 N7 N6 M4 L2 J0 I0 H0 G0 F0 D0";
const LIMIT = "A6 E14 F15 H18 J18 L18 N14 N13 N12 N7 N6 L2 J0";
const pts = (names) => names.split(" ").map((n) => NODES[n].join(",")).join(" ");
const linkPath = LINKS.trim().split(/\s+/).map((t) => {
  const [from, to] = t.split(":");
  return to.split(",").map((n) => `M${NODES[from]}L${NODES[n]}`).join("");
}).join("");
const HOLES = [[1179, 126], [1181, 250.8], [1181, 292.4], [1178, 373.4], [1180, 460], [1181, 549.4]];

/* ---------- composed parts ---------- */

const Tool = ({ name, ...rest }) => <ToolButton {...rest}><Icon name={name} /></ToolButton>;

const Branch = ({ h, box, last }) => (
  <svg width="15" height={h} viewBox={`0 0 15 ${h}`}>
    <path d={`M6.5 0V${last ? h / 2 : h}M6.5 ${h / 2}H13`} stroke="#c2c2c2" strokeDasharray="1 1" fill="none" />
    {box && <g>
      <rect x="3.5" y={h / 2 - 3} width="6" height="6" fill="#f7f7f7" stroke="#a6a6a6" strokeWidth=".8" />
      <path d={`M4.8 ${h / 2}h3.4M6.5 ${h / 2 - 1.7}v3.4`} stroke="#666" strokeWidth=".8" />
    </g>}
  </svg>
);
const Cross = ({ size = 9 }) => (
  <svg width={size} height={size} viewBox="0 0 9 9"><path d="M1 1l7 7M8 1L1 8" stroke="#111" strokeWidth="2.2" /></svg>
);

const Mesh = () => (
  <Canvas width="1003" height="529" viewBox="226 109 1003 529">
    <polygon points={pts(HULL)} fill="#b4c9ab" stroke="#7e8b7c" strokeWidth="1.1" />
    <g fill="none" stroke="#4b5a48" strokeWidth="1.15">
      {CHAINS.map((c) => <polyline key={c} points={pts(c)} />)}
      <path d={linkPath} />
    </g>
    <g stroke="#5c5552" strokeWidth=".9">
      {Object.entries(NODES).map(([k, [x, y]]) => (
        <circle key={k} cx={x} cy={y} r="3.3" fill={LIMIT.split(" ").includes(k) ? "#e3ecdf" : "#fff"} />
      ))}
    </g>
    <polyline points={pts(LIMIT)} fill="none" stroke="#47c225" strokeWidth="3" strokeLinejoin="round" />
    {HOLES.map(([x, y]) => <path key={y} d={`M${x} ${y}H1228`} stroke="#7dd898" strokeWidth="1.3" />)}
  </Canvas>
);

const Arrow = () => (
  <Canvas width="1003" height="529" viewBox="226 109 1003 529">
    <g fill="none" stroke="#000" strokeOpacity=".22" strokeWidth="4" transform="translate(.8 2)">
      <path d="M571 223L228 117M241 113.5L227 117L236.5 127" />
    </g>
    <g fill="none" stroke="#c0504d" strokeWidth="3.8">
      <path d="M571 222.5L228 116.5" />
      <path d="M241 113L227 116.3L236.5 126.5" />
    </g>
  </Canvas>
);

const OfficeIcon = ({ letter, color, light }) => (
  <svg width="26" height="28" viewBox="0 0 26 28">
    <path d="M2 2.5L22 1v25L2 24z" fill={light} stroke={color} strokeWidth="1" />
    <path d="M13 13l11 1v11l-11 .5z" fill="#fff" stroke="#b9c4d4" strokeWidth=".6" />
    <path d="M15 17l7 .6M15 19.5l7 .5M15 22l7 .4" stroke={color} strokeWidth=".9" />
    <text x="2.5" y="20" fontSize="18" fontWeight="700" fill={color} fontFamily="Liberation Sans, sans-serif">{letter}</text>
  </svg>
);

export default function App() {
  return (
    <Window>
      <Global />
      <TitleBar>
        <Title><Icon name="qgis" size={12} />QGIS 2.18.18 - tuto</Title>
        <Caption>
          <CaptionButton $grow={22} $first><svg width="12" height="8"><rect x="1" y="3.5" width="10" height="3" fill="#fff" stroke="#56637d" strokeWidth=".7" /></svg></CaptionButton>
          <CaptionButton $grow={21}><svg width="12" height="11"><path d="M3.5 1.5h7v7h-7z" fill="none" stroke="#fff" strokeWidth="1.4" /><path d="M1.5 3h7v7h-7z" fill="#8fa2c6" stroke="#fff" strokeWidth="1.6" /><path d="M4 5.5h2v2H4z" fill="#56637d" /></svg></CaptionButton>
          <CaptionButton $grow={38} $close><svg width="12" height="10"><path d="M2 1l7.5 8M9.5 1L2 9" stroke="#6e2a20" strokeWidth="3.6" /><path d="M2 1l7.5 8M9.5 1L2 9" stroke="#fff" strokeWidth="2.3" /></svg></CaptionButton>
        </Caption>
      </TitleBar>

      <MenuBar>{MENUS.map(([m, w]) => <MenuItem key={m} $w={w}>{m}</MenuItem>)}</MenuBar>

      <ToolBar>
        <Grip $after={1} />
        {FILE_TOOLS.map((n) => <Tool key={n} name={n} />)}
        <Grip $gap={3} />
        {NAV_TOOLS.map((n) => <Tool key={n} name={n} />)}
        <Grip $gap={2.5} />
        <Tool name="info" />
        <Tool name="action" /><Caret $dim />
        <Tool name="select" $on $w={22} /><Caret $on $w={10} />
        <Tool name="expr" /><Caret />
        {["deselect", "table", "abacus", "sigma", "ruler"].map((n) => <Tool key={n} name={n} />)}
        <Caret />
        <Tool name="tip" $on />
        <Tool name="textNote" /><Caret $w={9} />
        <Grip $gap={3.5} />
        <Tool name="help" />
      </ToolBar>

      <ToolBar>
        <Grip $after={0} />
        <Tool name="pencils" $w={23} />
        <Tool name="pencil" $on />
        <Tool name="saveEdit" /><Tool name="addPoly" /><Tool name="addLine" /><Caret />
        {EDIT_TOOLS.map((n) => <Tool key={n} name={n} />)}
        <Grip $gap={3} />
        {LABEL_TOOLS.map((n) => <Tool key={n} name={n} />)}
        <Grip $gap={2.5} />
        <Tool name="csw" />
        <Grip $gap={2.5} />
        <Tool name="python" />
      </ToolBar>

      <ToolBar>
        <Grip />
        <Tool name="bars" $w={18} />
        <Select $w={95} $ml={3}><span /><Caret /></Select>
        <Select $w={96} $bg="#d9d9d9" $mr={0.5}><span>SN x4</span><Caret /></Select>
        <Tool name="secL" /><Tool name="secR" /><Tool name="secDots" />
        <Grip $gap={3} />
        <PushButton $w={19} $mr={6}>xy</PushButton>
        <Label $w={29}>z-scale</Label>
        <Slider $w={268} />
        <SpinBox $w={32} $ml={4} $mr={5}><span>1</span><Steps /></SpinBox>
        <Label $w={53}>Transparency</Label>
        <Slider $w={267} />
        <PushButton $w={44} $dark $ml={4} $mr={5}>Layers...<Corner /></PushButton>
        <PushButton $w={61} $mr={5}>Add edge</PushButton>
        <PushButton $w={61} $mr={5}>Delete edge</PushButton>
        <PushButton $w={61} $mr={0}>Resfresh</PushButton>
      </ToolBar>

      <Popup>
        <Option>SN x4</Option>
        <Option $active>WE x4</Option>
      </Popup>

      <Body>
        <SideBar>
          <SideGrip />
          {SIDE.map(([n, caret, shift]) => (
            <SideItem key={n} $shift={shift}><Icon name={n} />{caret ? <Caret $w={14} /> : null}</SideItem>
          ))}
          <SideGrip $mt={5} />
          <SideItem $shift><Icon name="sat" /></SideItem>
        </SideBar>

        <Dock>
          <DockTitle $h={15}><DotLine $w={62} />Couches<DotLine $mr={22} /></DockTitle>
          <DockTools $h={18}>
            {["brush", "groupAdd", "eye", "filter", "exprFilter"].map((n) => <DockTool key={n}><Icon name={n} size={10.5} /></DockTool>)}
            <Caret $w={8} />
            {["expand", "collapse", "remove"].map((n) => <DockTool key={n}><Icon name={n} size={10.5} /></DockTool>)}
          </DockTools>
          <Tree $h={237}>
            {LAYERS.map((l) => {
              const h = l.icon && !l.current ? 12.8 : 10.2;
              return (
                <TreeRow key={l.name} $h={h} $current={l.current}>
                  <Branch h={h} box={l.box} />
                  <Check>{l.on && <Cross />}</Check>
                  <Symbol $mr={l.icon ? (l.current ? 1.5 : 3.5) : 2.5}>{l.icon ? <Icon name={l.icon} size={l.current ? 10.5 : 13} /> : <Dash $c={l.line} />}</Symbol>
                  <LayerName $current={l.current}>{l.name}</LayerName>
                </TreeRow>
              );
            })}
            <TreeRow $h={12.8}>
              <Branch h={12.8} last />
              <Symbol $w={12} $mr={4}><Icon name="metadata" size={12} /></Symbol>
              <LayerName>metadata</LayerName>
            </TreeRow>
          </Tree>
          <Tabs><Tab $w={49} $active>Couches</Tab><Tab $w={28}>3D</Tab></Tabs>
          <DockTitle $h={22}>
            <DotLine $w={51} />Explorateur (2)<DotLine />
            <MiniButton><svg width="7" height="7"><path d="M2.5 1h3.5v3H2.500zM1 3h3.500v3H1z" fill="none" stroke="#111" /></svg></MiniButton>
            <MiniButton $ml={-3}><Cross size={6} /></MiniButton>
          </DockTitle>
          <DockTools $h={16}>
            {["addFrame", "refresh", "filter", "collapse", "infoDot"].map((n) => <DockTool key={n}><Icon name={n} size={10.5} /></DockTool>)}
          </DockTools>
          <Tree $h={205}>
            {SOURCES.map(([name, icon, h, box], i) => (
              <TreeRow key={name} $h={h}>
                <Branch h={h} box={box} last={i === SOURCES.length - 1} />
                <Symbol $w={icon === "folderY" ? 10 : 12.5} $mr={icon === "folderY" ? 3 : 3.5}>
                  <Icon name={icon} size={icon === "folderY" ? 10.3 : 12.5} />
                </Symbol>
                {name}
              </TreeRow>
            ))}
          </Tree>
        </Dock>
        <Splitter />

        <MapPanel>
          <Mesh />
          <Arrow />
          <Callout>Select the section<br />trend to create</Callout>
        </MapPanel>
      </Body>

      <StatusBar>
        <Label>7 entités supprimées</Label>
        <Spacer />
        <Label $w={46}>Coordonnée</Label>
        <Field>31739008.7,33491096.4</Field>
        <Label $w={22}><Icon name="mouse" size={13} /></Label>
        <Label $w={30}>Échelle</Label>
        <Select $w={63} $bg="#fff" $mr={3}><span>1:1 805</span><Caret /></Select>
        <Label $w={22}><Icon name="lock" size={13} /></Label>
        <Label $w={24}>Loupe</Label>
        <SpinBox $w={52} $mr={5}><span>100%</span><Steps /></SpinBox>
        <Label $w={36}>Rotation</Label>
        <SpinBox $w={52} $mr={5}><span>0,0</span><Steps /></SpinBox>
        <Label $w={13}><Cross size={8} /></Label>
        <Label $w={35}>Rendu</Label>
        <Label $w={14}><Icon name="crs" size={12} /></Label>
        <Label $w={83}>EPSG:32632 (ALV)</Label>
        <Label $w={24}><Icon name="bubble" size={13} /></Label>
      </StatusBar>

      <TaskBar>
        <TaskItem $w={43}>
          <svg width="28" height="28" viewBox="0 0 28 28">
            <circle cx="14" cy="14" r="13" fill="#2c5a8e" stroke="#1d3558" /><ellipse cx="14" cy="22" rx="9" ry="5" fill="#49b2dc" opacity=".7" />
            <ellipse cx="14" cy="7" rx="10" ry="5.5" fill="#8fb0d2" opacity=".6" />
            <path d="M7 9c2-1.4 4-1.4 6-.2l-1 5c-2-1-4-1-6 .2z" fill="#e8592b" /><path d="M14 9.200c2 1.200 4.400 1.200 6.600 0l-1.200 5c-2 1.200-4.400 1.200-6.400 0z" fill="#8cc63f" />
            <path d="M5.800 15c2-1.200 4-1.200 6-.2l-1.200 5c-2-1-4-1-6 .2z" fill="#3fa4e0" /><path d="M12.800 15.200c2 1.200 4.400 1.200 6.400 0l-1.200 5c-2 1.200-4.400 1.200-6.400 0z" fill="#fcc92c" />
          </svg>
        </TaskItem>
        <TaskItem $w={47}><OfficeIcon letter="W" color="#2b579f" light="#dbe7f6" /></TaskItem>
        <TaskItem $w={44} $open>
          <svg width="28" height="28" viewBox="0 0 28 28">
            <path d="M20.500 18.500c-2 3.500-4.500 4.500-7 4.500-4 0-7-3-7-7s3-7.500 7.500-7.500 7.500 3 7.200 8H8" fill="none" stroke="#3aaee6" strokeWidth="4" />
            <path d="M5 25C1 22 6 11 14 6S26 2 24.500 7" fill="none" stroke="#f3c33c" strokeWidth="2.200" />
          </svg>
        </TaskItem>
        <TaskItem $w={46}>
          <svg width="27" height="26" viewBox="0 0 27 26">
            <path d="M2 3h9l1 2h12v18H2z" fill="#e7c95f" /><path d="M4 3.500h8M14 4.500h8" stroke="#c9553f" strokeWidth="1.500" /><path d="M1.500 7h24v16h-24z" fill="#f7e59a" stroke="#d8b64e" strokeWidth=".8" />
            <path d="M5 24v-6c0-2 1-3 3-3h11c2 0 3 1 3 3v6h-4v-4H9v4z" fill="#9fd2ee" stroke="#5fa4cc" strokeWidth=".8" />
          </svg>
        </TaskItem>
        <TaskItem $w={40}>
          <svg width="24" height="24" viewBox="0 0 24 24">
            <path d="M8 2h14v18l-14 2z" fill="#5fb2df" stroke="#3a87b8" strokeWidth=".8" /><path d="M3 3h14v19H3z" fill="#a8d8f2" stroke="#5ba5cf" strokeWidth=".8" />
            <circle cx="10" cy="12.500" r="7" fill="#f08a24" stroke="#fff" /><path d="M8 8.500l6 4-6 4z" fill="#fff" />
          </svg>
        </TaskItem>
        <TaskItem $w={50}><OfficeIcon letter="O" color="#e39a1c" light="#fbe6ae" /></TaskItem>
        <TaskItem $w={41}><OfficeIcon letter="X" color="#2f8a45" light="#d8efd9" /></TaskItem>
        <TaskItem $w={47}><OfficeIcon letter="N" color="#7c2d86" light="#ecd8ef" /></TaskItem>
        <TaskItem $w={41} $ml={1} $mr={5} $open><OfficeIcon letter="P" color="#d4502a" light="#fadccf" /></TaskItem>
        <TaskItem $w={42} $open><Icon name="qgis" size={27} /></TaskItem>
        <Spacer />
        <Lang>FR</Lang>
        <Battery>
          <svg width="36" height="16" viewBox="0 0 36 16">
            <rect x=".6" y=".6" width="33" height="14.800" fill="#111" stroke="#cfd6e4" strokeWidth="1.200" /><rect x="34" y="4" width="2" height="8" fill="#111" />
            <rect x="1.400" y="1.400" width="25" height="13.200" fill="#0f7a26" /><rect x="1.400" y="1.400" width="25" height="5" fill="#3fa653" />
            <text x="16.500" y="11.500" fontSize="9.500" fill="#fff" textAnchor="middle" fontFamily="Open Sans, sans-serif">77%</text>
          </svg>
          <svg width="14" height="10" viewBox="0 0 14 10"><path d="M0 5h3M3 2c2-2 4-2 7-1.500v9C7 10 5 10 3 8zM10 2.500h4M10 7.500h4" fill="#111" stroke="#111" strokeWidth="1.600" /></svg>
        </Battery>
        <Tray>
          <TrayIcon $w={10}><svg width="6" height="4"><path d="M0 3.500L3 .5l3 3z" fill="#fff" /></svg></TrayIcon>
          <TrayIcon $w={30}><svg width="12" height="13"><path d="M1.500 2.500h5v9h-5zM3 1h2" fill="#5f7096" stroke="#fff" strokeWidth="1.200" /><path d="M8.500 3v3M11 3v3M8 6h3.500v2.500H8zM9.700 8.500V12" stroke="#fff" fill="#fff" /></svg></TrayIcon>
          <TrayIcon $w={12}><svg width="11" height="12"><path d="M0 4h2.500L6 .5v11L2.500 8H0z" fill="#fff" /><path d="M8 3.500c1.200 1.500 1.200 3.500 0 5" stroke="#fff" fill="none" /></svg></TrayIcon>
          <TrayIcon $w={26}><svg width="11" height="10"><path d="M1 8v2M3.300 6.500V10M5.600 4.500V10M7.900 2.500V10M10.200 .5V10" stroke="#fff" strokeWidth="1.400" /></svg></TrayIcon>
          <Clock>18:46<br />31/03/2018</Clock>
          <ShowDesktop />
        </Tray>
      </TaskBar>
    </Window>
  );
}
